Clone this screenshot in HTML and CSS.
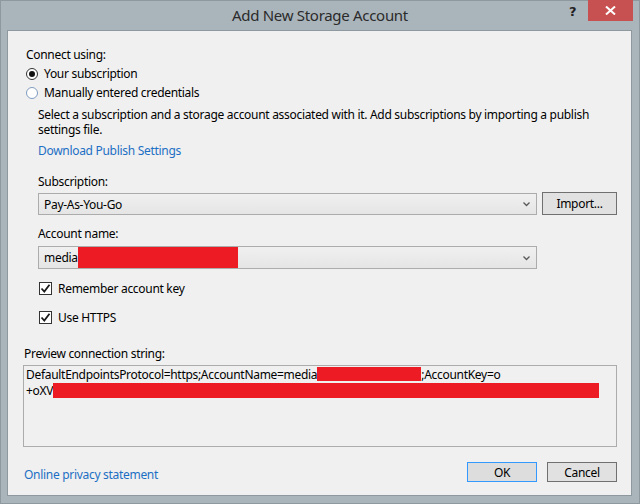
FILE: index.html
```html
<!DOCTYPE html>
<html>
<head>
<meta charset="utf-8">
<link rel="stylesheet" href="styles.css">
</head>
<body>
<div class="window">
  <div class="titlebar">
    <div class="title">Add New Storage Account</div>
    <div class="help">?</div>
    <div class="close">
      <svg width="11" height="9" viewBox="0 0 11 9"><path d="M1 0.5 L10 8.5 M10 0.5 L1 8.5" stroke="#fff" stroke-width="2"/></svg>
    </div>
  </div>
  <div class="client">
    <div class="connect">
      <div class="label">Connect using:</div>
      <div class="radio-row"><span class="radio checked"><span class="dot"></span></span><span>Your subscription</span></div>
      <div class="radio-row"><span class="radio"></span><span>Manually entered credentials</span></div>
      <div class="inner">
        <div class="desc">Select a subscription and a storage account associated with it. Add subscriptions by importing a publish settings file.</div>
        <div class="link dl">Download Publish Settings</div>
        <div class="label sub-label">Subscription:</div>
        <div class="combo-row">
          <div class="combo"><span class="combo-text">Pay-As-You-Go</span><svg class="chev" width="7" height="5" viewBox="0 0 7 5"><path d="M0.5 0.5 L3.5 3.5 L6.5 0.5" fill="none" stroke="#5a5a5a" stroke-width="1.3"/></svg></div>
          <div class="button import">Import...</div>
        </div>
        <div class="label acc-label">Account name:</div>
        <div class="combo-row">
          <div class="combo combo2"><span class="combo-text">media</span><span class="red red-acc"></span><svg class="chev" width="7" height="5" viewBox="0 0 7 5"><path d="M0.5 0.5 L3.5 3.5 L6.5 0.5" fill="none" stroke="#5a5a5a" stroke-width="1.3"/></svg></div>
        </div>
        <div class="check-row first"><span class="check"><svg width="11" height="11" viewBox="0 0 11 11"><path d="M1.5 5.5 L4.3 8.5 L9.5 1.8" fill="none" stroke="#1a1a1a" stroke-width="1.8"/></svg></span><span>Remember account key</span></div>
        <div class="check-row second"><span class="check"><svg width="11" height="11" viewBox="0 0 11 11"><path d="M1.5 5.5 L4.3 8.5 L9.5 1.8" fill="none" stroke="#1a1a1a" stroke-width="1.8"/></svg></span><span>Use HTTPS</span></div>
      </div>
    </div>
    <div class="label preview-label">Preview connection string:</div>
    <div class="textarea">
      <div class="tline">DefaultEndpointsProtocol=https;AccountName=media<span class="red red1"></span>;AccountKey=o</div>
      <div class="tline">+oXV<span class="red red2"></span></div>
    </div>
    <div class="footer">
      <div class="link privacy">Online privacy statement</div>
      <div class="buttons">
        <div class="button ok">OK</div>
        <div class="button cancel">Cancel</div>
      </div>
    </div>
  </div>
</div>
</body>
</html>
```

FILE: styles.css
```css
* { box-sizing: border-box; }
html, body { margin: 0; padding: 0; }
body {
  width: 640px;
  height: 504px;
  overflow: hidden;
  font-family: "Noto Sans", "Open Sans", sans-serif;
  font-size: 12px;
  letter-spacing: -0.3px;
  color: #000;
}
.window {
  width: 640px;
  height: 504px;
  background: #aab4bb;
  border: 1px solid #8e989f;
  display: flex;
  flex-direction: column;
}
.titlebar {
  height: 29px;
  position: relative;
  display: flex;
  align-items: center;
  justify-content: center;
}
.title {
  font-size: 15px;
  letter-spacing: -0.3px;
  color: #2b2b2b;
  line-height: 20px;
  margin-top: -1px;
}
.help {
  position: absolute;
  left: 568px;
  top: 3px;
  font-family: "DejaVu Sans", sans-serif;
  font-weight: bold;
  font-size: 13px;
  color: #222;
}
.close {
  position: absolute;
  left: 587px;
  top: -1px;
  width: 45px;
  height: 21px;
  background: #c75050;
  display: flex;
  align-items: center;
  justify-content: center;
}
.client {
  margin: 0 7px 7px 6px;
  flex: 1;
  background: #f0f0f0;
  border: 1px solid #8e989f;
  padding: 16px 14px 0 16px;
}
.label, .radio-row, .desc, .link, .check-row, .tline {
  line-height: 15px;
}
.connect { padding-left: 2px; }
.radio-row {
  height: 19px;
  display: flex;
  align-items: center;
  gap: 6px;
}
.connect .label + .radio-row { margin-top: 2px; }
.radio {
  width: 12px;
  height: 12px;
  border-radius: 50%;
  border: 1px solid #7f9cc0;
  background: #fff;
  display: flex;
  align-items: center;
  justify-content: center;
}
.radio.checked { border-color: #333; }
.dot {
  width: 6px;
  height: 6px;
  border-radius: 50%;
  background: #111;
}
.inner { padding-left: 12px; }
.desc { margin-top: 5px; }
.link { color: #1c6fc4; }
.dl { margin-top: 6px; }
.sub-label { margin-top: 16px; }
.combo-row {
  display: flex;
  align-items: flex-start;
  gap: 5px;
  margin-top: 4px;
}
.combo {
  width: 499px;
  height: 22px;
  border: 1px solid #acacac;
  background: linear-gradient(#f0f0f0, #e5e5e5);
  display: flex;
  align-items: center;
  padding-left: 5px;
  position: relative;
}
.combo2 { height: 23px; }
.chev {
  position: absolute;
  right: 6px;
  top: 8px;
}
.combo2 .chev { top: 9px; }
.button {
  height: 23px;
  border: 1px solid #707070;
  background: #e1e1e1;
  display: flex;
  align-items: center;
  justify-content: center;
}
.import { width: 75px; margin-top: -1px; }
.acc-label { margin-top: 11px; }
.acc-label + .combo-row { margin-top: 5px; }
.red { display: inline-block; background: #ed1c24; }
.red-acc { width: 160px; height: 21px; }
.check-row {
  display: flex;
  align-items: center;
  gap: 6px;
  height: 15px;
}
.check-row.first { margin-top: 12px; padding-left: 1px; }
.check-row.second { margin-top: 14px; padding-left: 1px; }
.check {
  width: 13px;
  height: 13px;
  border: 1px solid #333;
  background: #fff;
  display: flex;
  align-items: center;
  justify-content: center;
}
.preview-label { margin-top: 21px; }
.textarea {
  margin-top: 4px;
  margin-left: -1px;
  height: 82px;
  border: 1px solid #acacac;
  padding: 1px 2px 0 2px;
}
.tline { white-space: nowrap; line-height: 16px; }
.red1 { width: 104px; height: 14px; vertical-align: -2px; }
.red2 { width: 546px; height: 15px; vertical-align: -3px; }
.footer {
  margin-top: 15px;
  display: flex;
  justify-content: space-between;
  align-items: center;
}
.privacy { padding-top: 4px; }
.buttons { display: flex; gap: 10px; }
.ok, .cancel { width: 70px; height: 20px; }
.ok { border-color: #3399ff; background: #dddddd; }
.cancel { border-color: #707070; }
```
